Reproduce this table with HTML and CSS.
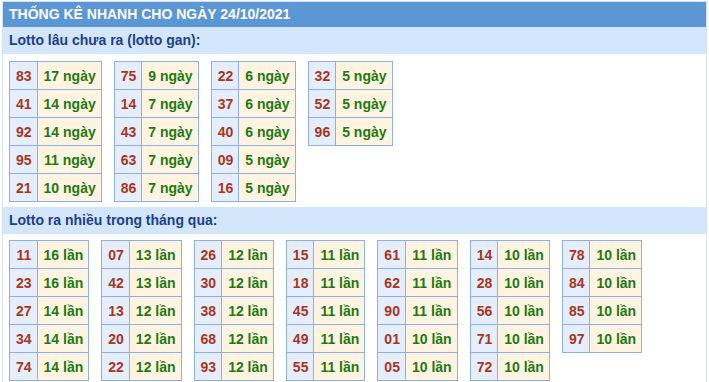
FILE: index.html
```html
<!DOCTYPE html>
<html lang="vi">
<head>
<meta charset="utf-8">
<title>Thống kê nhanh</title>
<link rel="stylesheet" href="styles.css">
</head>
<body>
<div class="box">
  <div class="title">THỐNG KÊ NHANH CHO NGÀY 24/10/2021</div>

  <div class="sub">Lotto lâu chưa ra (lotto gan):</div>
  <div class="group first">
    <table class="t"><tbody>
      <tr><td class="n">83</td><td class="v">17 ngày</td></tr>
      <tr><td class="n">41</td><td class="v">14 ngày</td></tr>
      <tr><td class="n">92</td><td class="v">14 ngày</td></tr>
      <tr><td class="n">95</td><td class="v">11 ngày</td></tr>
      <tr><td class="n">21</td><td class="v">10 ngày</td></tr>
    </tbody></table>
    <table class="t"><tbody>
      <tr><td class="n">75</td><td class="v">9 ngày</td></tr>
      <tr><td class="n">14</td><td class="v">7 ngày</td></tr>
      <tr><td class="n">43</td><td class="v">7 ngày</td></tr>
      <tr><td class="n">63</td><td class="v">7 ngày</td></tr>
      <tr><td class="n">86</td><td class="v">7 ngày</td></tr>
    </tbody></table>
    <table class="t"><tbody>
      <tr><td class="n">22</td><td class="v">6 ngày</td></tr>
      <tr><td class="n">37</td><td class="v">6 ngày</td></tr>
      <tr><td class="n">40</td><td class="v">6 ngày</td></tr>
      <tr><td class="n">09</td><td class="v">5 ngày</td></tr>
      <tr><td class="n">16</td><td class="v">5 ngày</td></tr>
    </tbody></table>
    <table class="t"><tbody>
      <tr><td class="n">32</td><td class="v">5 ngày</td></tr>
      <tr><td class="n">52</td><td class="v">5 ngày</td></tr>
      <tr><td class="n">96</td><td class="v">5 ngày</td></tr>
    </tbody></table>
  </div>

  <div class="sub">Lotto ra nhiều trong tháng qua:</div>
  <div class="group">
    <table class="t"><tbody>
      <tr><td class="n">11</td><td class="v">16 lần</td></tr>
      <tr><td class="n">23</td><td class="v">16 lần</td></tr>
      <tr><td class="n">27</td><td class="v">14 lần</td></tr>
      <tr><td class="n">34</td><td class="v">14 lần</td></tr>
      <tr><td class="n">74</td><td class="v">14 lần</td></tr>
    </tbody></table>
    <table class="t"><tbody>
      <tr><td class="n">07</td><td class="v">13 lần</td></tr>
      <tr><td class="n">42</td><td class="v">13 lần</td></tr>
      <tr><td class="n">13</td><td class="v">12 lần</td></tr>
      <tr><td class="n">20</td><td class="v">12 lần</td></tr>
      <tr><td class="n">22</td><td class="v">12 lần</td></tr>
    </tbody></table>
    <table class="t"><tbody>
      <tr><td class="n">26</td><td class="v">12 lần</td></tr>
      <tr><td class="n">30</td><td class="v">12 lần</td></tr>
      <tr><td class="n">38</td><td class="v">12 lần</td></tr>
      <tr><td class="n">68</td><td class="v">12 lần</td></tr>
      <tr><td class="n">93</td><td class="v">12 lần</td></tr>
    </tbody></table>
    <table class="t"><tbody>
      <tr><td class="n">15</td><td class="v">11 lần</td></tr>
      <tr><td class="n">18</td><td class="v">11 lần</td></tr>
      <tr><td class="n">45</td><td class="v">11 lần</td></tr>
      <tr><td class="n">49</td><td class="v">11 lần</td></tr>
      <tr><td class="n">55</td><td class="v">11 lần</td></tr>
    </tbody></table>
    <table class="t"><tbody>
      <tr><td class="n">61</td><td class="v">11 lần</td></tr>
      <tr><td class="n">62</td><td class="v">11 lần</td></tr>
      <tr><td class="n">90</td><td class="v">11 lần</td></tr>
      <tr><td class="n">01</td><td class="v">10 lần</td></tr>
      <tr><td class="n">05</td><td class="v">10 lần</td></tr>
    </tbody></table>
    <table class="t"><tbody>
      <tr><td class="n">14</td><td class="v">10 lần</td></tr>
      <tr><td class="n">28</td><td class="v">10 lần</td></tr>
      <tr><td class="n">56</td><td class="v">10 lần</td></tr>
      <tr><td class="n">71</td><td class="v">10 lần</td></tr>
      <tr><td class="n">72</td><td class="v">10 lần</td></tr>
    </tbody></table>
    <table class="t"><tbody>
      <tr><td class="n">78</td><td class="v">10 lần</td></tr>
      <tr><td class="n">84</td><td class="v">10 lần</td></tr>
      <tr><td class="n">85</td><td class="v">10 lần</td></tr>
      <tr><td class="n">97</td><td class="v">10 lần</td></tr>
    </tbody></table>
  </div>
</div>
</body>
</html>
```

FILE: styles.css
```css
html, body {
  margin: 0;
  padding: 0;
  background: #ffffff;
}

body {
  font-family: "Liberation Sans", Arial, sans-serif;
  font-size: 14px;
  font-weight: bold;
}

.box {
  margin: 1px 2px 0 2px;
  border: 1px solid #d3e1f1;
  border-bottom: none;
  background: #ffffff;
}

.title {
  background: #5b96d5;
  color: #ffffff;
  height: 25px;
  line-height: 25px;
  padding-left: 6px;
  font-size: 14px;
}

.sub {
  background: #d3e6fb;
  color: #1d3f8c;
  height: 27px;
  line-height: 27px;
  padding-left: 6px;
  font-size: 14px;
}

.group {
  display: flex;
  align-items: flex-start;
  gap: 12px;
  padding: 6px 6px 5px 6px;
}

.group.first {
  padding-top: 7px;
}

.t {
  border-collapse: collapse;
  border: 1px solid #90afdc;
}

.t td {
  border: 1px solid #90afdc;
  height: 27px;
  padding: 0 5px 0 6px;
  text-align: center;
  vertical-align: middle;
  font-size: 14px;
  white-space: nowrap;
}

.t td.n {
  background: #e5eefc;
  color: #a6361f;
}

.t td.v {
  background: #fff3e1;
  color: #1d7a12;
}
```
